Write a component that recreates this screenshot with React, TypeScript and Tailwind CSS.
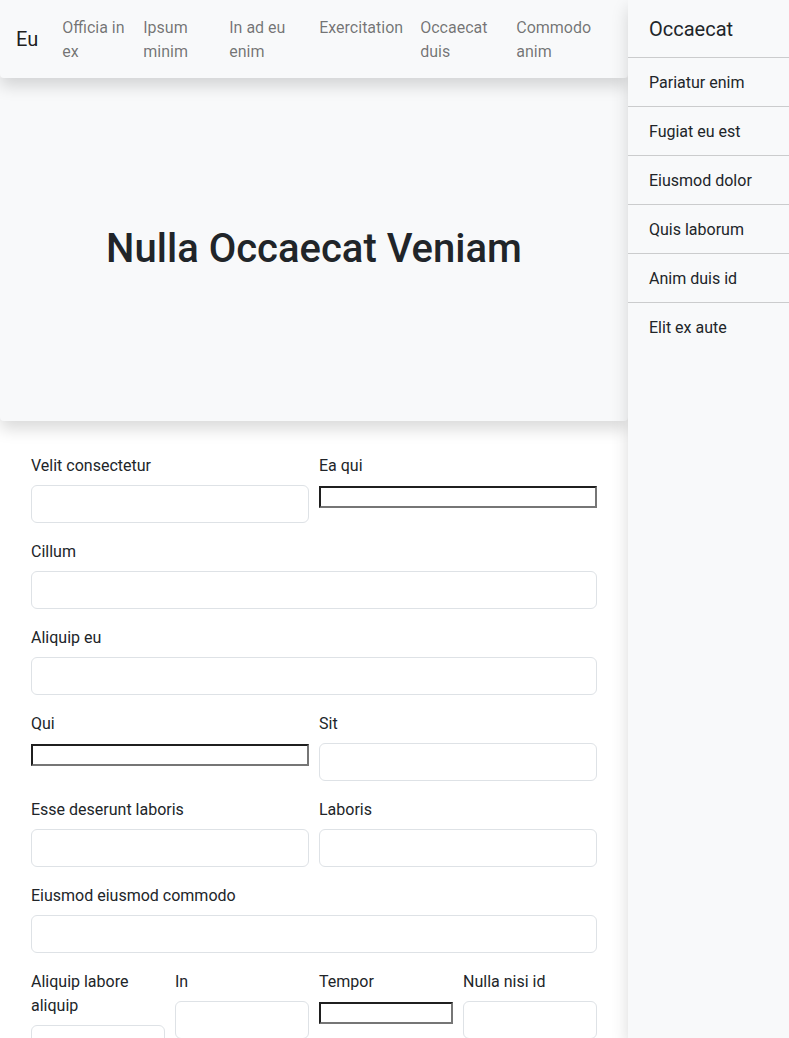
import React from "react";

const font = { fontFamily: "Roboto, 'Liberation Sans', sans-serif" };

function Field({ label, kind = "normal" }: { label: string; kind?: "normal" | "plain" }) {
  return (
    <div className="flex flex-col mb-4">
      <label className="relative top-[1px] text-[16px] leading-6 text-[#212529] mb-2">{label}</label>
      {kind === "normal" ? (
        <input className="h-[38px] w-full rounded-[6px] border border-[#dee2e6] bg-white" />
      ) : (
        <input className="mt-[1px] h-[22px] w-full border-2 border-t-[#1f1f1f] border-l-[#1f1f1f] border-b-[#767676] border-r-[#767676] bg-white" />
      )}
    </div>
  );
}

export default function App() {
  const links = [
    ["Officia in ex", "w-[81px]"],
    ["Ipsum minim", "w-[86px]"],
    ["In ad eu enim", "w-[90px]"],
    ["Exercitation", "w-[101px]"],
    ["Occaecat duis", "w-[96px]"],
    ["Commodo anim", "w-[96px]"],
  ];
  const items = ["Pariatur enim", "Fugiat eu est", "Eiusmod dolor", "Quis laborum", "Anim duis id", "Elit ex aute"];
  return (
    <div className="flex min-h-screen bg-white text-[#212529]" style={font}>
      <main className="w-[628px] shrink-0">
        <nav className="relative z-10 flex h-[78px] items-center rounded-b-[4px] bg-[#f8f9fa] px-4 py-2 shadow-[0_8px_16px_rgba(0,0,0,0.15)]">
          <span className="mr-4 text-[20px] leading-[30px] text-black/90">Eu</span>
          <div className="flex self-start">
            {links.map(([t, w]) => (
              <a key={t} className={`${w} shrink-0 px-2 py-2 text-[16px] leading-6 text-black/55`}>{t}</a>
            ))}
          </div>
        </nav>
        <section className="relative z-0 flex h-[343px] items-center justify-center rounded-b-[4px] bg-[#f8f9fa] pb-[1px] shadow-[0_8px_16px_rgba(0,0,0,0.15)]">
          <h1 className="text-[40px] font-medium leading-[48px] text-[#212529]">Nulla Occaecat Veniam</h1>
        </section>
        <form className="px-[31px] pt-[32px]">
          <div className="grid grid-cols-2 gap-x-[10px]">
            <Field label="Velit consectetur" />
            <Field label="Ea qui" kind="plain" />
          </div>
          <Field label="Cillum" />
          <Field label="Aliquip eu" />
          <div className="grid grid-cols-2 gap-x-[10px]">
            <Field label="Qui" kind="plain" />
            <Field label="Sit" />
          </div>
          <div className="grid grid-cols-2 gap-x-[10px]">
            <Field label="Esse deserunt laboris" />
            <Field label="Laboris" />
          </div>
          <Field label="Eiusmod eiusmod commodo" />
          <div className="grid grid-cols-4 gap-x-[10px]">
            <Field label="Aliquip labore aliquip" />
            <Field label="In" />
            <Field label="Tempor" kind="plain" />
            <Field label="Nulla nisi id" />
          </div>
        </form>
      </main>
      <aside className="sticky top-0 z-20 h-screen w-[161px] shrink-0 bg-[#f8f9fa] shadow-[0_8px_16px_rgba(0,0,0,0.15)]">
        <div className="border-b border-black/[0.18] px-[21px] pt-[17px] pb-4 text-[20px] leading-6 text-[#212529]">Occaecat</div>
        {items.map((t, i) => (
          <div
            key={t}
            className={`px-[21px] pt-[13px] pb-[11px] text-[16px] leading-6 text-[#212529] ${i < items.length - 1 ? "border-b border-black/[0.18]" : ""}`}
          >
            {t}
          </div>
        ))}
      </aside>
    </div>
  );
}
